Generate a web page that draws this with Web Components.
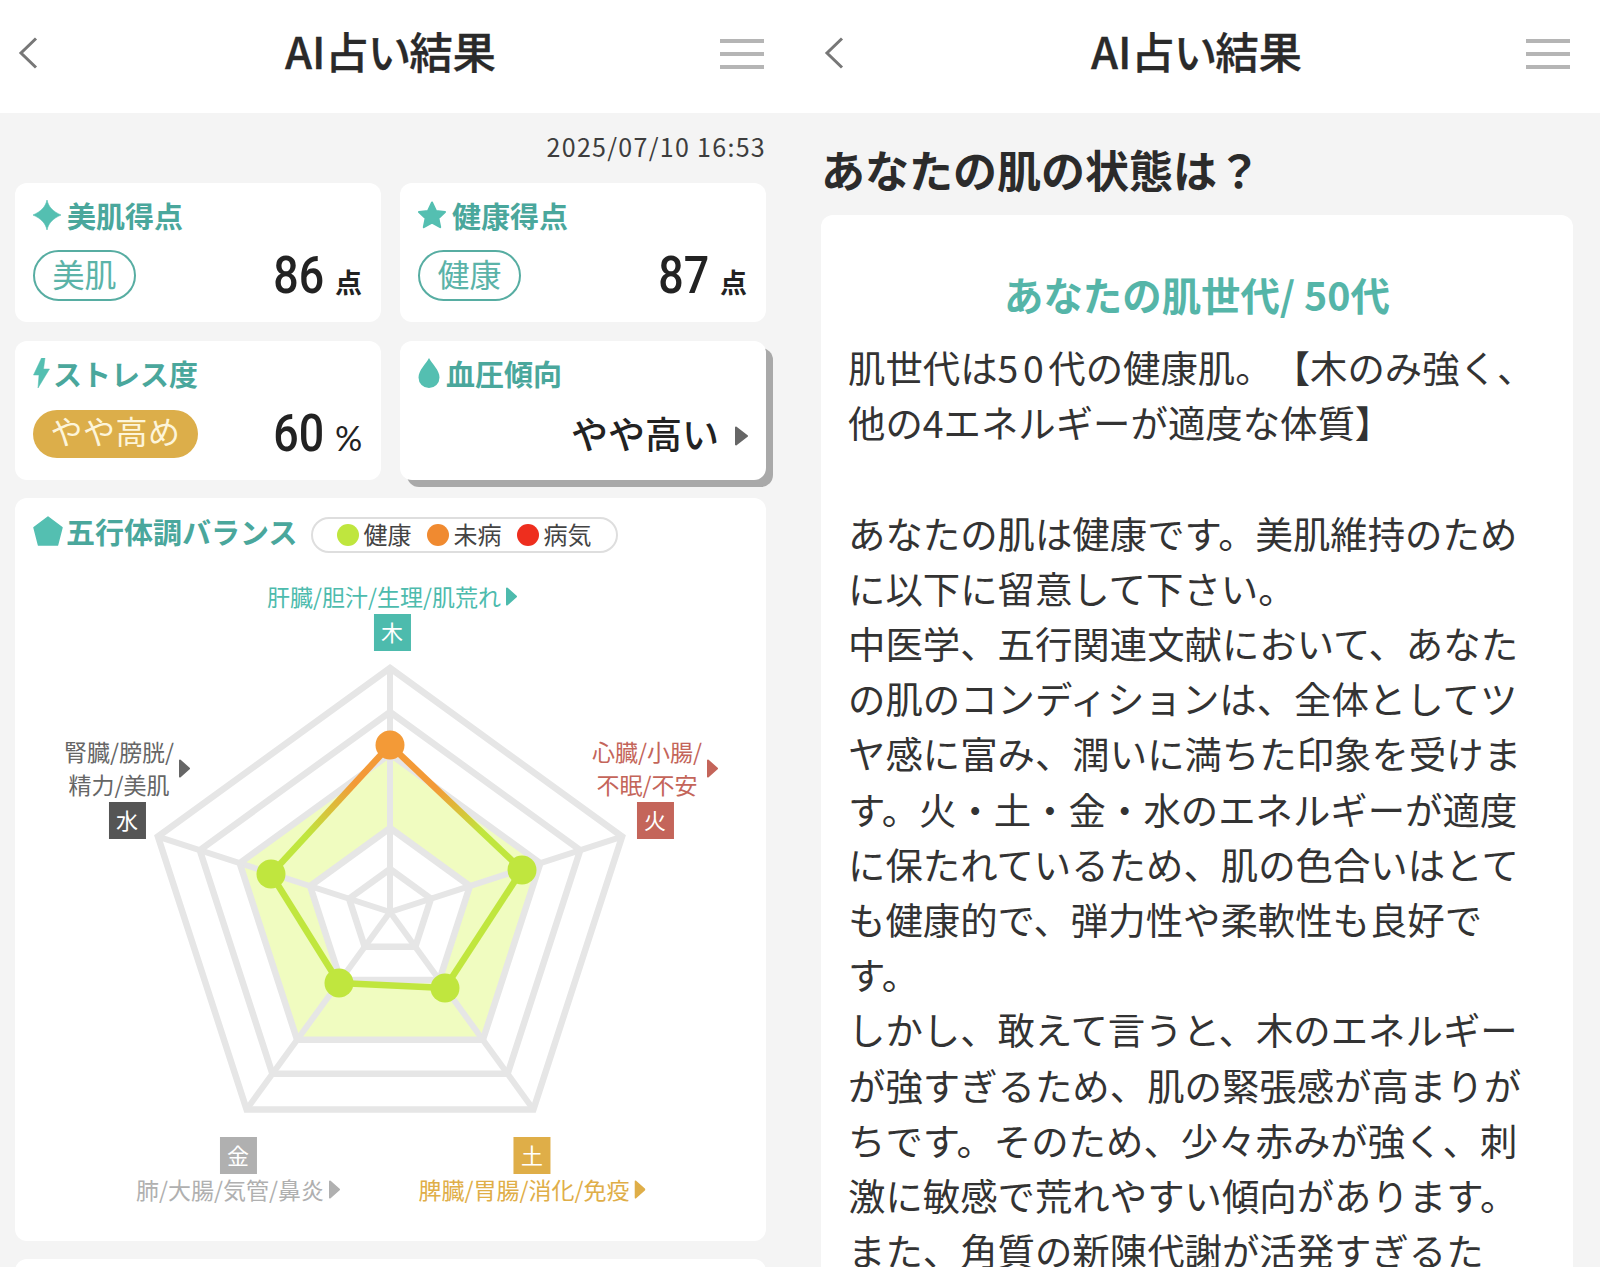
<!DOCTYPE html>
<html lang="ja"><head><meta charset="utf-8">
<style>
html,body{margin:0;padding:0;background:#f4f4f4;overflow:hidden}
body{width:1600px;height:1267px;display:flex;font-family:"Noto Sans CJK JP","Noto Sans",sans-serif;color:#2b2b2b}
</style></head>
<body>
<fortune-screen style="--w:806px">
  <date-line>2025/07/10 16:53</date-line>
  <metric-grid>
    <metric-card icon="sparkle" label="美肌得点" tag="美肌" value="86" unit="点"></metric-card>
    <metric-card icon="star" label="健康得点" tag="健康" value="87" unit="点"></metric-card>
    <metric-card icon="bolt" label="ストレス度" tag="やや高め" tag-fill value="60" unit="%"></metric-card>
    <trend-card label="血圧傾向" value="やや高い"></trend-card>
  </metric-grid>
  <balance-card></balance-card>
  <stub-card></stub-card>
</fortune-screen>
<fortune-screen style="--w:794px">
  <skin-report></skin-report>
</fortune-screen>
<script>
const FONT='"Noto Sans CJK JP","Noto Sans",sans-serif';
const icons={
 sparkle:'<svg viewBox="0 0 28 30" width="28" height="30"><path d="M14 0C15.500 7 20 11.500 28 15C20 18.500 15.500 23 14 30C12.500 23 8 18.500 0 15C8 11.500 12.500 7 14 0Z" fill="#54bfb1" stroke="#54bfb1" stroke-width=".6"/></svg>',
 star:'<svg viewBox="0 0 28 28" width="28" height="30"><path d="M14 1.500L18 10L27 11L20.400 17.200L22.200 26.200L14 21.700L5.800 26.200L7.600 17.200L1 11L10 10Z" fill="#54bfb1" stroke="#54bfb1" stroke-width="2" stroke-linejoin="round"/></svg>',
 bolt:'<svg viewBox="0 0 17 30" width="17" height="30"><path d="M8.500 0L0.500 17H6L5 30L16.500 11H10.500L12 0Z" fill="#54bfb1" stroke="#54bfb1" stroke-width=".5" stroke-linejoin="round"/></svg>',
 drop:'<svg viewBox="0 0 22 30" width="22" height="30"><path d="M11 0C14 6 21.500 12 21.500 19.500A10.500 10.500 0 0 1 0.500 19.500C0.500 12 8 6 11 0Z" fill="#54bfb1"/></svg>',
 penta:'<svg viewBox="0 0 30 30" width="30" height="30"><path d="M15 1L29 11.500L24.500 29H5.500L1 11.500Z" fill="#54bfb1" stroke="#54bfb1" stroke-linejoin="round" stroke-width="1.500"/></svg>'
};
function def(name,css,html){
 customElements.define(name,class extends HTMLElement{
  constructor(){super();this.attachShadow({mode:'open'});}
  connectedCallback(){this.shadowRoot.innerHTML='<style>'+css+'</style>'+(typeof html==='function'?html(this):html);}
 });
}
def('app-header',`
 :host{display:flex;align-items:center;justify-content:center;position:relative;height:113px;background:#fff;box-sizing:border-box;width:781px;flex:none;box-shadow:25px 0 0 #fff}
 h1{margin:0;font:500 43.500px/1 ${FONT};color:#2a2a2a;font-feature-settings:"palt";position:relative;top:-6px;letter-spacing:-.2px;-webkit-text-stroke:.3px #2a2a2a}
 .back{position:absolute;left:18px;top:37px;display:block}
 .menu{position:absolute;right:17px;top:39px;width:44px;display:flex;flex-direction:column;gap:9.500px}
 .menu i{display:block;height:3.500px;background:#b5b5b5}
`,`<svg class="back" width="20" height="32" viewBox="0 0 20 32"><path d="M18 1.500L3 16L18 30.500" fill="none" stroke="#777" stroke-width="3"/></svg><h1>AI占い結果</h1><div class="menu"><i></i><i></i><i></i></div>`);

def('fortune-screen',`
 :host{display:flex;flex-direction:column;width:var(--w);flex:none;height:1267px;overflow:hidden;background:#f4f4f4}
 .body{display:flex;flex-direction:column;padding-left:15px;width:751px}
`,`<app-header></app-header><div class="body"><slot></slot></div>`);

def('date-line',`
 :host{display:block;text-align:right;font:400 25px/1 ${FONT};color:#3d3d3d;height:70px;padding-top:21px;box-sizing:border-box;letter-spacing:1.300px;white-space:nowrap}
`,`<slot></slot>`);

def('metric-grid',`
 :host{display:grid;grid-template-columns:366px 366px;column-gap:19px;row-gap:19px;grid-auto-rows:139px;margin-bottom:18px}
`,`<slot></slot>`);

def('card-title',`
 :host{display:flex;align-items:center;gap:var(--gap,5px);font:700 29px/30px ${FONT};color:#4aa79c;white-space:nowrap}
 svg,span{display:block}
`,(el)=>`<span>${icons[el.getAttribute('icon')]}</span><slot></slot>`);

def('metric-card',`
 :host{display:flex;flex-direction:column;background:#fff;border-radius:12px;padding:17px 19px 0 18px;box-sizing:border-box}
 .row{display:flex;justify-content:space-between;align-items:center;margin-top:20.500px;height:50px}
 .tag{display:flex;align-items:center;justify-content:center;box-sizing:border-box;height:51px;width:103px;padding-bottom:6px;border:2px solid #57ada2;border-radius:26px;color:#5bb3a8;font:400 32px/1 ${FONT}}
 .tag.fill{background:#dcae4a;border:0;width:165px;height:48px;padding-bottom:8px;color:#fdf5da;font-size:32px;letter-spacing:.5px}
 .val{display:flex;align-items:baseline;color:#222}
 .num{font:500 52px/50px Roboto,sans-serif;display:inline-block;transform:scaleX(.86);transform-origin:100% 50%;margin-left:-10px}
 .unit{font:700 27px/1 ${FONT};margin-left:11px;width:27px;text-align:center}
 .unit.pct{font:400 34px/1 "Lato",sans-serif}
`,(el)=>{
 const fill=el.hasAttribute('tag-fill');const u=el.getAttribute('unit');
 return `<card-title icon="${el.getAttribute('icon')}" style="--gap:${el.getAttribute('icon')==='bolt'?'3px':'6px'}">${el.getAttribute('label')}</card-title>
 <div class="row"><div class="tag ${fill?'fill':''}">${el.getAttribute('tag')}</div><div class="val"><span class="num">${el.getAttribute('value')}</span><span class="unit ${u==='%'?'pct':''}">${u}</span></div></div>`;
});

def('trend-card',`
 :host{display:flex;flex-direction:column;background:#fff;border-radius:12px;padding:17px 18px 0 18px;box-sizing:border-box;box-shadow:7px 7px 0 #a9a9a9}
 .row{display:flex;justify-content:flex-end;align-items:center;gap:16px;margin-top:23px;height:50px}
 b{font:500 37px/1 ${FONT};color:#222;padding-bottom:6px}
 svg{display:block}
`,(el)=>`<card-title icon="drop" style="--gap:6px">${el.getAttribute('label')}</card-title><div class="row"><b>${el.getAttribute('value')}</b><svg width="13" height="20" viewBox="0 0 13 20"><path d="M1 1.500L12 10L1 18.500Z" fill="#666" stroke="#666" stroke-width="2" stroke-linejoin="round"/></svg></div>`);

def('radar-label',`
 :host{position:absolute;transform:translateX(-50%);display:flex;flex-direction:column;align-items:center;color:var(--c);font:400 23px/33px ${FONT};white-space:nowrap}
 .t{display:flex;align-items:center;gap:var(--tg,5px)}
 .t.b{margin-top:-1.500px}
 .lines{text-align:center}
 .box{width:37px;height:37px;margin-top:1px;background:var(--bc,var(--c));color:#fff;display:flex;align-items:center;justify-content:center;font:400 22px/1 ${FONT};padding-bottom:3px;box-sizing:border-box}
 svg{display:block;flex:none}
`,(el)=>{
 const lines=el.getAttribute('text').split('|').join('<br>');
 const below=el.hasAttribute('below');
 const tx=`<div class="t ${below?'b':''}"><div class="lines">${lines}</div><svg width="11" height="19" viewBox="0 0 11 19"><path d="M1 1.500L10 9.500L1 17.500Z" fill="var(--c)" stroke="var(--c)" stroke-width="2" stroke-linejoin="round"/></svg></div>`;
 const bx=`<div class="box">${el.getAttribute('box')}</div>`;
 return below?bx+tx:tx+bx;
});

const CY=359;
const pt=(r,i)=>{const a=-Math.PI/2+i*2*Math.PI/5;return [375+r*Math.cos(a),CY+r*Math.sin(a)];};
const poly=r=>[0,1,2,3,4].map(i=>pt(r,i).map(v=>v.toFixed(1)).join(',')).join(' ');
const pathOf=r=>'M'+[0,1,2,3,4].map(i=>pt(r,i).map(v=>v.toFixed(1)).join(' ')).join('L')+'Z';
def('radar-chart',`
 :host{display:block;position:relative;height:663px}
 svg{position:absolute;left:0;top:0}
`,()=>{
 const rings=[244,200,158,84,43].map(r=>`<polygon points="${poly(r)}" fill="none" stroke="#e6e6e6" stroke-width="6.500" stroke-linejoin="miter"/>`).join('');
 const spokes=[0,1,2,3,4].map(i=>{const p=pt(244,i);return `<line x1="375" y1="${CY}" x2="${p[0].toFixed(1)}" y2="${p[1].toFixed(1)}" stroke="#e6e6e6" stroke-width="6"/>`}).join('');
 const g='#c0e63e';const o='#f39a37';
 const P=[[375,192],[507,317],[430,435],[324,430],[256,321]];
 const grads=`<defs><linearGradient id="gr" gradientUnits="userSpaceOnUse" x1="375" y1="192" x2="507" y2="317"><stop offset=".35" stop-color="${o}"/><stop offset=".7" stop-color="${g}"/></linearGradient><linearGradient id="gl" gradientUnits="userSpaceOnUse" x1="375" y1="192" x2="256" y2="321"><stop offset=".3" stop-color="${o}"/><stop offset=".7" stop-color="${g}"/></linearGradient></defs>`;
 const ln=(a,b,c)=>`<line x1="${a[0]}" y1="${a[1]}" x2="${b[0]}" y2="${b[1]}" stroke="${c}" stroke-width="6.500"/>`;
 return `<svg width="751" height="663" viewBox="0 0 751 663">${grads}
  <path d="${pathOf(158)}${pathOf(84)}" fill="#f0fcc0" fill-rule="evenodd"/>${spokes}${rings}
  ${ln(P[1],P[2],g)}${ln(P[2],P[3],g)}${ln(P[3],P[4],g)}${ln(P[0],P[1],'url(#gr)')}${ln(P[0],P[4],'url(#gl)')}
  <circle cx="${P[0][0]}" cy="${P[0][1]}" r="14.500" fill="${o}"/>
  ${P.slice(1).map(p=>`<circle cx="${p[0]}" cy="${p[1]}" r="14.500" fill="${g}"/>`).join('')}</svg><slot></slot>`;
});

def('balance-card',`
 :host{display:block;background:#fff;border-radius:12px;height:743px;width:751px;box-sizing:border-box;padding:19px 0 0 0;margin-bottom:18px}
 .head{display:flex;align-items:center;padding-left:18px;height:36px}
 .head card-title{margin-bottom:8px}
 .legend{display:flex;align-items:center;margin-left:14px;box-sizing:border-box;width:307px;height:36px;border:2px solid #dedede;border-radius:18px;padding-left:24px;font:400 24px/1 ${FONT};color:#444}
 .legend i{width:22px;height:22px;border-radius:50%;display:block;margin-right:4px}
 .legend span{margin-right:16px;padding-bottom:2px}
`,`<div class="head"><card-title icon="penta" style="--gap:3px">五行体調バランス</card-title>
 <div class="legend"><i style="background:#bfe63e"></i><span>健康</span><i style="background:#f08a30"></i><span>未病</span><i style="background:#ee2e1e"></i><span>病気</span></div></div>
 <radar-chart>
 <radar-label text="肝臓/胆汁/生理/肌荒れ" box="木" style="--c:#4dbbad;left:377px;top:27px"></radar-label>
 <radar-label text="腎臓/膀胱/|精力/美肌" box="水" style="--c:#666;--bc:#555;left:112px;top:182px"></radar-label>
 <radar-label text="心臓/小腸/|不眠/不安" box="火" style="--c:#c4655a;left:640px;top:182px"></radar-label>
 <radar-label below text="肺/大腸/気管/鼻炎" box="金" style="--c:#b0b0b0;left:223px;top:583px"></radar-label>
 <radar-label below text="脾臓/胃腸/消化/免疫" box="土" style="--c:#dfae48;left:517px;top:583px"></radar-label>
 </radar-chart>`);

def('stub-card',`:host{display:block;background:#fff;border-radius:12px;height:60px;width:751px}`,'');

def('skin-report',`
 :host{display:block}
 h2{margin:0;font:700 44px/1 ${FONT};color:#2b2b2b;padding:34px 0 0 0;height:102px;box-sizing:border-box;white-space:nowrap}
 .card{background:#fff;border-radius:12px;width:752px;box-sizing:border-box;padding:54px 27px 0;height:1100px}
 h3{margin:0 0 21px;text-align:center;font:700 39.400px/50px ${FONT};color:#55b5a8}
 p{margin:0;font:400 37.400px/55.200px ${FONT};color:#333;white-space:nowrap;text-spacing-trim:space-all}
 .d{letter-spacing:4.600px}
`,`<h2>あなたの肌の状態は？</h2><div class="card"><h3>あなたの肌世代/ 50代</h3><p>肌世代は<span class="d">50</span>代の健康肌。【木のみ強く、<br>他の4エネルギーが適度な体質】<br><br>あなたの肌は健康です。美肌維持のため<br>に以下に留意して下さい。<br>中医学、五行関連文献において、あなた<br>の肌のコンディションは、全体としてツ<br>ヤ感に富み、潤いに満ちた印象を受けま<br>す。火・土・金・水のエネルギーが適度<br>に保たれているため、肌の色合いはとて<br>も健康的で、弾力性や柔軟性も良好で<br>す。<br>しかし、敢えて言うと、木のエネルギー<br>が強すぎるため、肌の緊張感が高まりが<br>ちです。そのため、少々赤みが強く、刺<br>激に敏感で荒れやすい傾向があります。<br>また、角質の新陳代謝が活発すぎるた</p></div>`);
</script>
</body></html>
